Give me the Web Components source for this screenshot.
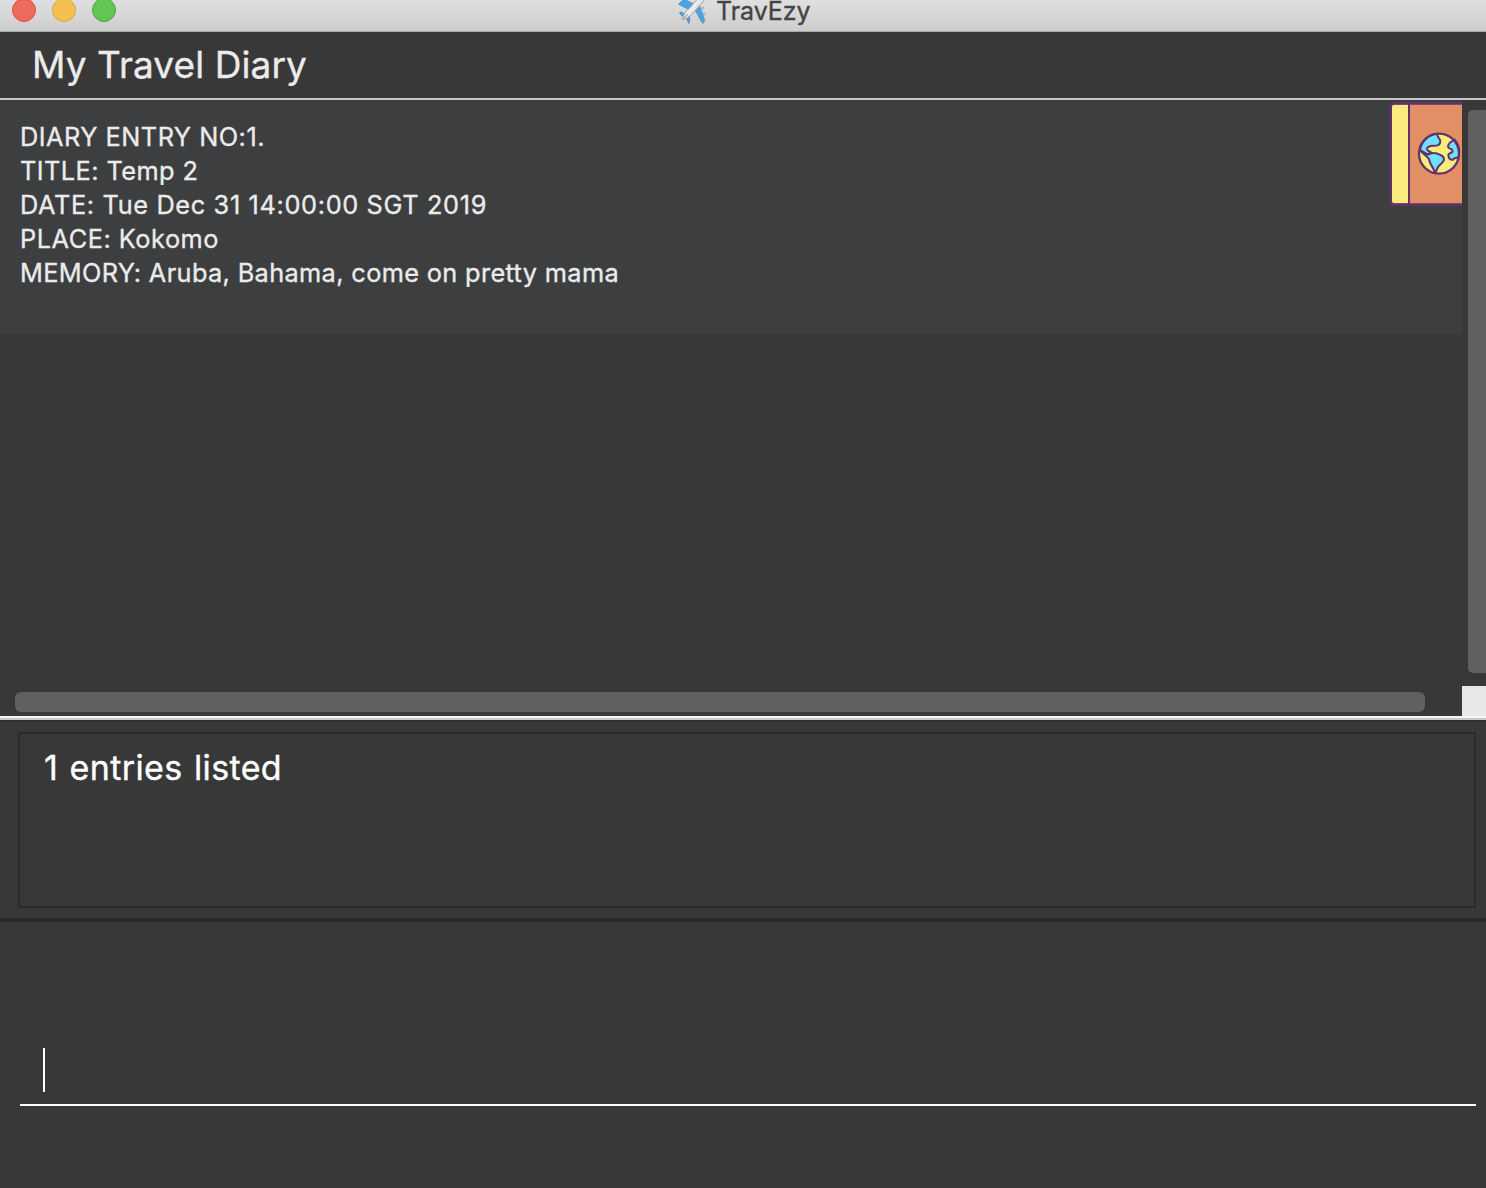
<!DOCTYPE html>
<html lang="en">
<head>
<meta charset="utf-8">
<title>TravEzy</title>
<style>
body{margin:0;background:#383838;font-family:Inter,"Noto Sans",sans-serif;overflow:hidden}
</style>
</head>
<body>
<trav-app></trav-app>
<script>
const define=(name,html,setup)=>customElements.define(name,class extends HTMLElement{
  constructor(){super();this.attachShadow({mode:'open'}).innerHTML=html;}
  connectedCallback(){if(setup)setup(this);}
});

/* Text tracked so that its advance width equals the "width" attribute. */
define('fit-text','<style>:host{display:block;width:max-content;white-space:pre;-webkit-text-stroke:.35px currentColor}</style><slot></slot>',el=>{
  const natural=el.getBoundingClientRect().width;
  const want=+el.getAttribute('width');
  if(want&&natural)el.style.letterSpacing=(want-natural)/el.textContent.length+'px';
});

define('plane-icon',`<style>:host{display:block;width:30px;height:30px}svg{display:block}</style>
<svg width="30" height="30" viewBox="0 -5 30 30">
<defs><linearGradient id="b" x1="0" y1="0" x2="1" y2="1"><stop offset=".35" stop-color="#fbfbfb"/><stop offset="1" stop-color="#a9adb2"/></linearGradient></defs>
<path d="M18 4.500L7-1 1.500 4.300 12.500 10zM18 10L22.500 5.500 27.800 20.500 25.600 23.600z" fill="#4aa3e6" stroke="#3c86bd" stroke-width=".6"/>
<path d="M9 14.500L3.600 11.800 2.400 13.200 6.800 17.400zM9.500 18.500L12.300 15.500 13 20.500 11.700 23.800z" fill="#4aa3e6" stroke="#3c86bd" stroke-width=".6"/>
<path d="M5.600 19.300C5.800 15 9.300 11.300 13 7.500L20.600-.8C23-3.100 26.800-5.200 28-4.200 29-2.900 27 .8 24.900 3.200L17.500 11.600C13.700 15.800 10.300 19 5.600 19.300z" fill="url(#b)" stroke="#8a8d90" stroke-width=".7"/>
<path d="M6 18.800L10.500 14.300" stroke="#777c82" stroke-width="1"/>
<path d="M24.300 8l1.800-1.200.9 1.100-1.800 1.800zM26 13.600l1.600-1 .8 1.200-1.600 1.500z" fill="#c5cbd0" stroke="#888" stroke-width=".5"/>
</svg>`);

define('diary-icon',`<style>:host{display:block;width:72px;height:106px}svg{display:block}</style>
<svg width="72" height="106" viewBox="1390 101 72 106">
<path d="M1465 103.400H1394Q1391 103.400 1391 106.400V201.600Q1391 204.600 1394 204.600H1465z" fill="#e38f66" stroke="#62316b" stroke-width="2.800"/>
<path d="M1394 105H1408V203H1394Q1392 203 1392 201V107Q1392 105 1394 105z" fill="#f9eb7d"/>
<path d="M1409 104V204" stroke="#62316b" stroke-width="2"/>
<circle cx="1439" cy="153.600" r="20" fill="#f9eb7d"/>
<g fill="#6fe0fd" stroke="#62316b" stroke-width="2" stroke-linejoin="round">
<path d="M1420 150C1421.500 141.500 1428 134.800 1437 133.800C1437 137.500 1440.300 138 1440.300 141C1440.300 145.500 1437 146 1433 145.800C1429.500 146 1426.500 147 1427 149.500C1427.500 151.500 1431 151 1431.500 153.500L1426.500 154z"/>
<path d="M1420 150.500C1423 151.500 1425.500 153.500 1427 154.500C1430 154.500 1431 152.800 1433.500 153C1438 153 1438 154.500 1440.500 155C1443 156 1444 158 1444 160C1443 163 1439.500 164 1438 167C1437 169 1436.500 171 1435 173C1433.500 167 1430.800 166 1429.500 161C1429 156 1424 155.500 1420 150.500z"/>
<path d="M1454.500 139.500C1453 141.500 1449.500 141.500 1449 144C1446.500 147.500 1449.500 148.500 1452 149.500C1454 153 1449.500 152.500 1448.500 154.500C1448 158 1450 160 1453 159.800C1454 157.500 1456 157.500 1458.500 157.500C1460 151 1459 144.500 1454.500 139.500z"/>
</g>
<circle cx="1439" cy="153.600" r="20" fill="none" stroke="#62316b" stroke-width="2.300"/>
</svg>`);

define('window-bar',`<style>
:host{display:flex;box-sizing:border-box;height:32px;background:linear-gradient(#dfdfdf,#cdcdcd);border-bottom:1px solid #a8a8a8;justify-content:space-between}
.lights{display:flex;gap:16px;width:666px;padding-left:12px;box-sizing:border-box;margin-top:-2px}
i{box-sizing:border-box;width:24px;height:24px;border-radius:50%;background:#ed6a5e;border:1px solid #d9544a}
i:nth-child(2){background:#f5bf4f;border-color:#dba43c}i:nth-child(3){background:#62c554;border-color:#4ca93f}
.name{flex:1;display:flex;gap:9px;padding-left:11px;font-size:25px;line-height:22px;color:#444}
plane-icon{margin-top:-5px}
</style><div class="lights"><i></i><i></i><i></i></div><div class="name"><plane-icon></plane-icon><fit-text width="94.5">TravEzy</fit-text></div>`);

define('page-heading',`<style>:host{display:block;box-sizing:border-box;height:68px;padding:11px 0 0 32px;border-bottom:2px solid #c8c8c8;font-size:37px;line-height:44px;color:#ebebeb}</style>
<fit-text width="275">My Travel Diary</fit-text>`);

define('diary-entry',`<style>:host{display:flex;justify-content:space-between;box-sizing:border-box;height:234px;background:#3c3e3f;color:#ebebeb;font-size:25.300px;line-height:34px}
.lines{padding:20px 0 0 20px}diary-icon{margin-top:1px}</style><div class="lines"><slot></slot></div><diary-icon></diary-icon>`);

define('diary-list',`<style>
:host{display:grid;grid-template:586px 30px / 1462px 24px;background:#383838}
.v{padding:10px 0 13px 6px}.v b{display:block;height:563px;background:#606060;border-radius:5px 0 0 5px}
.h{padding:6px 37px 4px 15px}.h b{display:block;height:20px;background:#606060;border-radius:6px}
.c{background:#e8e8e8}
</style><div><slot></slot></div><div class="v"><b></b></div><div class="h"><b></b></div><div class="c"></div>`);

define('result-panel',`<style>
:host{display:block;box-sizing:border-box;height:206px;border-top:2px solid #f4f4f4;border-bottom:4px solid #2b2b2b}
.in{box-sizing:border-box;height:200px;border-top:2px solid #c8c8c8}
.edge{height:2px;background:#2d2d2d}
.box{box-sizing:border-box;margin:10px 10px 0 18px;height:176px;border:2px solid #2b2b2b;padding:13px 0 0 24px;color:#fff;font-size:34px;line-height:42px;word-spacing:1.500px}
</style><div class="in"><div class="edge"></div><div class="box"><slot></slot></div></div>`);

define('command-line',`<style>:host{display:block;box-sizing:border-box;height:266px;padding:126px 10px 0 20px}
.field{box-sizing:border-box;height:58px;border-bottom:2px solid #fff;padding-left:23px}.caret{width:2px;height:44px;background:#fff}
</style><div class="field"><div class="caret"></div></div>`);

define('trav-app',`<style>:host{display:flex;flex-direction:column;width:1486px;height:1188px}</style>
<window-bar></window-bar><page-heading></page-heading>
<diary-list><diary-entry>
<fit-text width="245">DIARY ENTRY NO:1.</fit-text>
<fit-text width="178.500">TITLE: Temp 2</fit-text>
<fit-text width="467">DATE: Tue Dec 31 14:00:00 SGT 2019</fit-text>
<fit-text width="199">PLACE: Kokomo</fit-text>
<fit-text width="599">MEMORY: Aruba, Bahama, come on pretty mama</fit-text>
</diary-entry></diary-list>
<result-panel><fit-text width="238">1 entries listed</fit-text></result-panel>
<command-line></command-line>`);
</script>
</body>
</html>
